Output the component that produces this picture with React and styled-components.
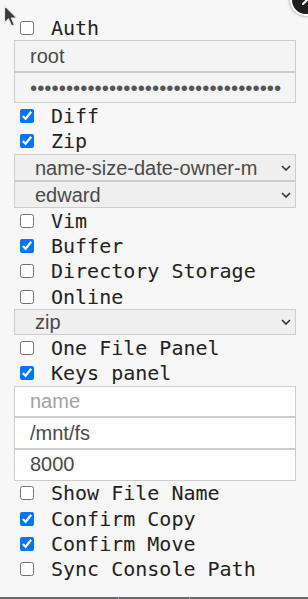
import styled, { createGlobalStyle } from 'styled-components';

const GlobalStyle = createGlobalStyle`
  html, body {
    margin: 0;
    padding: 0;
    background: #6f6f6f;
  }
`

const Page = styled.div`
  display: flex;
  flex-direction: column;
  width: 308px;
  height: 599px;
  overflow: hidden;
  position: relative;
`

const Panel = styled.div`
  display: flex;
  flex-direction: column;
  height: 597px;
  box-sizing: border-box;
  padding: 15px 12px 0 14px;
  background: #f7f7f7;
  box-shadow: 0 1px 3px rgba(0, 0, 0, 0.5);
`

const BottomStrip = styled.div`
  display: grid;
  grid-template-columns: 119px 71px 1fr;
  height: 2px;
  background: #6a6a6a;
`

const StripCell = styled.div`
  border-right: ${p => (p.$edge ? '1px solid #9aa4b8' : 'none')};
`

const Row = styled.label`
  display: flex;
  align-items: center;
  height: 25.3px;
  padding-left: 6px;
  gap: 17px;
  font-family: "DejaVu Sans Mono", monospace;
  font-size: 20px;
  color: #222;
  white-space: nowrap;
`

const Check = styled.input.attrs({ type: 'checkbox' })`
  margin: 0;
  width: 14px;
  height: 14px;
  flex: none;
`

const Field = styled.input`
  box-sizing: border-box;
  width: 282px;
  height: 31.6px;
  margin: 0;
  padding: 0 14px 0 15px;
  border: 1px solid #cdcdcd;
  border-radius: 0;
  background: ${p => (p.$filled ? '#f4f4f4' : '#fff')};
  font-family: "Liberation Sans", Arial, sans-serif;
  font-size: ${p => (p.type === 'password' ? 20.5 : 20)}px;
  color: ${p => (p.type === 'password' ? '#555' : '#4a4a4a')};
  outline: none;

  &::placeholder {
    color: #a3a3a3;
  }
`

const SelectWrap = styled.div`
  position: relative;
  width: 282px;
  height: ${p => p.$h || 27}px;
`

const Select = styled.select`
  appearance: none;
  box-sizing: border-box;
  width: 100%;
  height: 100%;
  margin: 0;
  padding: 0 37px 0 20px;
  border: 1px solid #cdcdcd;
  border-radius: 0;
  background: #efefef;
  font-family: "Liberation Sans", Arial, sans-serif;
  font-size: 20px;
  color: #4a4a4a;
  outline: none;
`

const Chevron = styled.svg`
  position: absolute;
  right: 5px;
  top: 50%;
  margin-top: -3px;
  pointer-events: none;
`

const CloseBubble = styled.div`
  position: absolute;
  top: -16px;
  right: -14px;
  width: 32px;
  height: 32px;
  border-radius: 50%;
  background: #1f1f1f;
  border: 2px solid #fff;
  box-shadow: 0 0 3px rgba(0, 0, 0, 0.5);
  display: flex;
  align-items: flex-end;
  justify-content: flex-start;
  padding: 0 0 9px 10px;
  box-sizing: border-box;
`

const Cursor = styled.svg`
  position: absolute;
  left: 3px;
  top: 4px;
`

const checks = [
  { label: 'Diff', on: true },
  { label: 'Zip', on: true },
];

const middle = [
  { label: 'Vim', on: false },
  { label: 'Buffer', on: true },
  { label: 'Directory Storage', on: false },
  { label: 'Online', on: false },
];

const bottom = [
  { label: 'Show File Name', on: false },
  { label: 'Confirm Copy', on: true },
  { label: 'Confirm Move', on: true },
  { label: 'Sync Console Path', on: false },
];

function Option({ label, on }) {
  return (
    <Row>
      <Check defaultChecked={on} />
      {label}
    </Row>
  );
}

function Dropdown({ h, value }) {
  return (
    <SelectWrap $h={h}>
      <Select defaultValue={value}>
        <option value={value}>{value}</option>
      </Select>
      <Chevron width="10" height="6" viewBox="0 0 10 6">
        <path d="M1 1 L5 5 L9 1" fill="none" stroke="#333" strokeWidth="1.6" />
      </Chevron>
    </SelectWrap>
  );
}

function App() {
  return (
    <Page>
      <GlobalStyle />
      <Panel>
        <Option label="Auth" on={false} />
        <Field $filled defaultValue="root" />
        <Field $filled type="password" defaultValue="passwordpasswordpasswordpassword123" />
        {checks.map(c => <Option key={c.label} {...c} />)}
        <Dropdown value="name-size-date-owner-mode" />
        <Dropdown value="edward" />
        {middle.map(c => <Option key={c.label} {...c} />)}
        <Dropdown h={26} value="zip" />
        <Option label="One File Panel" on={false} />
        <Option label="Keys panel" on={true} />
        <Field placeholder="name" />
        <Field defaultValue="/mnt/fs" />
        <Field defaultValue="8000" />
        {bottom.map(c => <Option key={c.label} {...c} />)}
      </Panel>
      <BottomStrip>
        <StripCell $edge />
        <StripCell $edge />
        <StripCell />
      </BottomStrip>
      <CloseBubble>
        <svg width="8" height="8" viewBox="0 0 8 8">
          <path d="M1 7 L7 1" stroke="#fff" strokeWidth="2" strokeLinecap="round" />
        </svg>
      </CloseBubble>
      <Cursor width="16" height="24" viewBox="0 0 16 24">
        <path d="M1.5 1.5 L1.5 19 L5.5 15 L8.6 22 L11.4 20.8 L8.4 14 L14 14 Z" fill="#3a3a3a" stroke="#e8e8e8" strokeWidth="1.2" strokeLinejoin="round" />
      </Cursor>
    </Page>
  );
}

export default App;
